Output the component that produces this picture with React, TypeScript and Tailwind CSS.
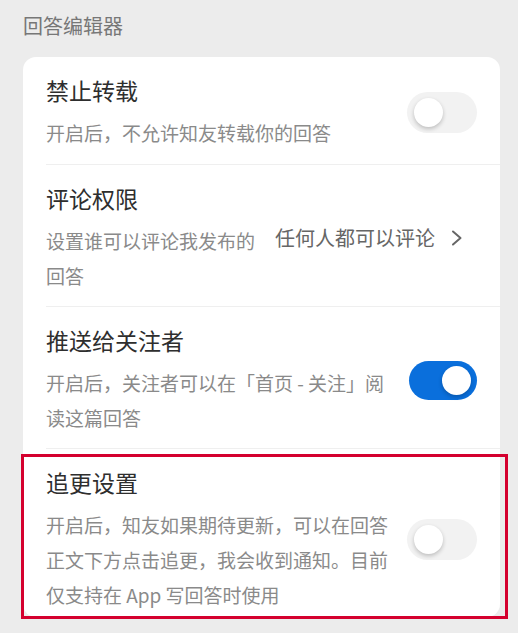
import { useState } from 'react';

interface ToggleProps {
  on: boolean;
  onChange: () => void;
}

function Toggle({ on, onChange }: ToggleProps) {
  return (
    <button
      type="button"
      onClick={onChange}
      aria-pressed={on}
      className={
        on
          ? 'relative shrink-0 w-[68px] h-[39px] rounded-full bg-[#0a6fdc] flex items-center justify-end pr-[6px]'
          : 'relative shrink-0 w-[70px] h-[41px] rounded-full bg-[#f2f2f2] flex items-center justify-start pl-[7px]'
      }
    >
      <span className="block w-[29px] h-[29px] rounded-full bg-white shadow-[0_2px_4px_rgba(0,0,0,0.22)]" />
    </button>
  );
}

function Row({
  title,
  desc,
  right,
  pb,
}: {
  title: string;
  desc: string;
  right: React.ReactNode;
  pb: string;
}) {
  return (
    <div className={`flex items-center pl-[23px] pr-[23px] pt-[18px] ${pb}`}>
      <div className="flex-1 min-w-0">
        <p className="text-[23px] leading-[30px] text-[#2e2e2e]">{title}</p>
        <p className="mt-[10px] text-[19px] leading-[35px] text-[#8a8a8a] max-w-[345px]">{desc}</p>
      </div>
      {right}
    </div>
  );
}

export default function App() {
  const [noRepost, setNoRepost] = useState(false);
  const [push, setPush] = useState(true);
  const [follow, setFollow] = useState(false);

  return (
    <div
      className="w-[518px] h-[633px] bg-[#ececec] overflow-hidden"
      style={{ fontFamily: '"Noto Sans CJK SC", "Noto Sans", sans-serif' }}
    >
      <p className="pl-[23px] pt-[11px] text-[20px] leading-[30px] text-[#777777]">回答编辑器</p>

      <div className="relative mt-[16px] ml-[23px] w-[477px] bg-white rounded-[13px]">
        <Row
          title="禁止转载"
          desc="开启后，不允许知友转载你的回答"
          pb="pb-[14px]"
          right={<Toggle on={noRepost} onChange={() => setNoRepost(!noRepost)} />}
        />
        <div className="ml-[23px] h-px bg-[#efefef]" />

        <div className="flex items-center pl-[23px] pr-[37px] pt-[18px] pb-[13px]">
          <div className="flex-1 min-w-0">
            <p className="text-[23px] leading-[30px] text-[#2e2e2e]">评论权限</p>
            <p className="mt-[10px] text-[19px] leading-[35px] text-[#8a8a8a] max-w-[215px]">
              设置谁可以评论我发布的回答
            </p>
          </div>
          <div className="flex items-center gap-[16px] text-[20px] leading-[30px] text-[#666666]">
            <span>任何人都可以评论</span>
            <svg width="12" height="16" viewBox="0 0 12 16" fill="none">
              <path d="M2 1.5 L9.5 8 L2 14.5" stroke="#666666" strokeWidth="2" strokeLinecap="round" strokeLinejoin="round" />
            </svg>
          </div>
        </div>
        <div className="ml-[23px] h-px bg-[#efefef]" />

        <Row
          title="推送给关注者"
          desc="开启后，关注者可以在「首页 - 关注」阅读这篇回答"
          pb="pb-[13px]"
          right={<Toggle on={push} onChange={() => setPush(!push)} />}
        />
        <div className="ml-[23px] h-px bg-[#efefef]" />

        <Row
          title="追更设置"
          desc="开启后，知友如果期待更新，可以在回答正文下方点击追更，我会收到通知。目前仅支持在 App 写回答时使用"
          pb="pb-[5px]"
          right={<Toggle on={follow} onChange={() => setFollow(!follow)} />}
        />

        {/* highlight frame round the last row */}
        <div className="absolute left-[-2px] right-[-8px] bottom-[-2px] h-[165px] border-[3px] border-[#d4002e] pointer-events-none" />
      </div>
    </div>
  );
}
